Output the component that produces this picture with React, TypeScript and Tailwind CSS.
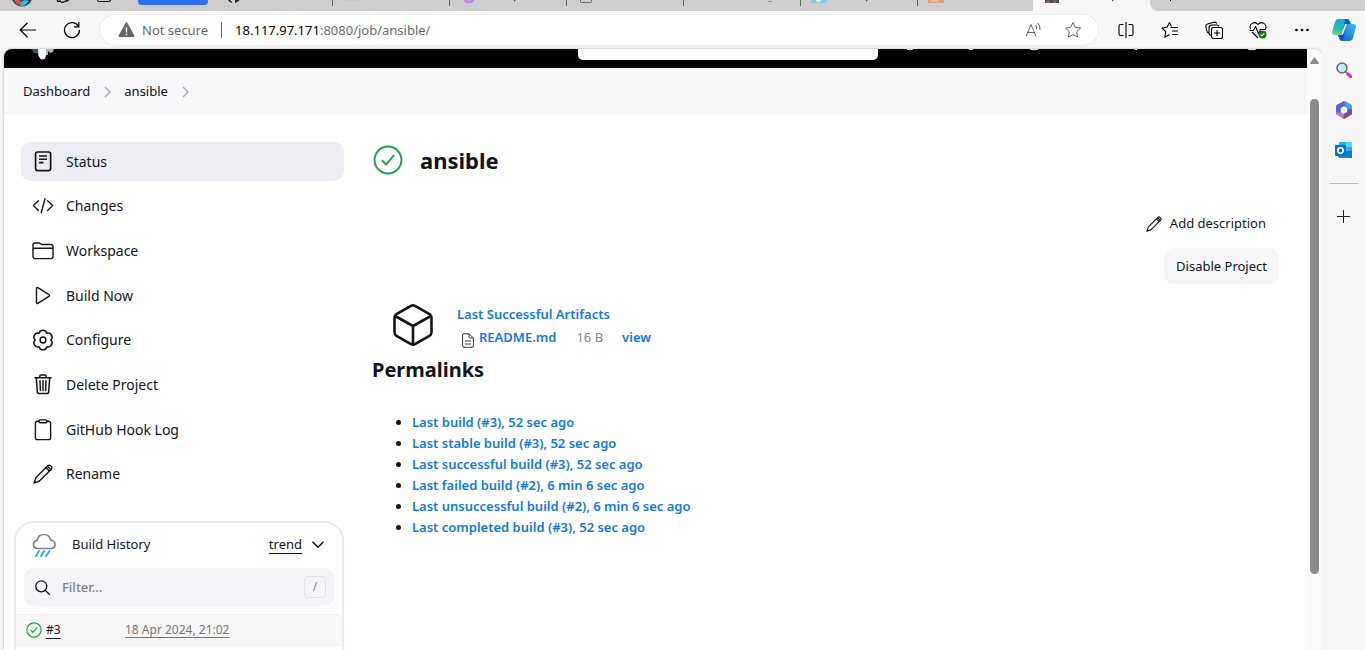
import type { ReactNode } from "react";

const FONT = "font-['Noto_Sans','Open_Sans',sans-serif]";

function Pencil({ className }: { className: string }) {
  return (
    <svg viewBox="0 0 20 20" className={className} fill="none" stroke="currentColor" strokeWidth="1.4" strokeLinejoin="round" strokeLinecap="round">
      <path d="M1 19 3 13.6 14.6 2a2.4 2.4 0 0 1 3.4 3.4L6.4 17Z" />
      <path d="m13 3.6 3.4 3.4M14.4 2.2c1.2 1 2.4 2.2 3.4 3.4" />
    </svg>
  );
}

function CheckCircle({ className, width }: { className: string; width: number }) {
  return (
    <svg viewBox="0 0 30 30" className={className} fill="none" stroke="#1ea64b" strokeWidth={width} strokeLinecap="round" strokeLinejoin="round">
      <circle cx="15" cy="15" r="13.4" />
      <path d="m9.4 15.8 3.6 3.8 7.6-9" />
    </svg>
  );
}

const svg = {
  viewBox: "0 0 22 22",
  className: "size-[22px] shrink-0",
  fill: "none",
  stroke: "currentColor",
  strokeWidth: 1.4,
  strokeLinejoin: "round" as const,
  strokeLinecap: "round" as const,
};

const tasks: { label: string; icon: ReactNode }[] = [
  {
    label: "Status",
    icon: (
      <svg {...svg}>
        <rect x="3.6" y="1" width="15" height="18.6" rx="2" strokeWidth="1.7" />
        <path d="M7 5h8M7 8.2h8M7 11.6h4.5" strokeWidth="1.6" strokeLinecap="butt" />
      </svg>
    ),
  },
  {
    label: "Changes",
    icon: (
      <svg {...svg}>
        <path d="M6.4 5.8 1.4 10.6l5 4.8M15.6 5.8l5 4.8-5 4.800M13 3.8 9.2 17.8" />
      </svg>
    ),
  },
  {
    label: "Workspace",
    icon: (
      <svg {...svg}>
        <path d="M1 16.6V5a2 2 0 0 1 2-2h4c1.4 0 1.8 1.5 3.2 1.5H19a2 2 0 0 1 2 2v10.1a2 2 0 0 1-2 2H3a2 2 0 0 1-2-2ZM1 8.300h20" />
      </svg>
    ),
  },
  {
    label: "Build Now",
    icon: (
      <svg {...svg}>
        <path d="M4.500 3.400v14.200c0 .7.700 1.100 1.300.8l11.200-7.100a.9.900 0 0 0 0-1.600L5.800 2.600c-.6-.3-1.300.1-1.300.8Z" />
      </svg>
    ),
  },
  {
    label: "Configure",
    icon: (
      <svg {...svg}>
        <circle cx="11" cy="11" r="2.900" strokeWidth="1.500" />
        <path d="M18.800 11a4 4 0 0 1-3.900 6.750 4 4 0 0 1-7.800 0A4 4 0 0 1 3.200 11a4 4 0 0 1 3.900-6.750 4 4 0 0 1 7.800 0A4 4 0 0 1 18.800 11Z" strokeWidth="1.500" />
      </svg>
    ),
  },
  {
    label: "Delete Project",
    icon: (
      <svg {...svg}>
        <path d="M3 3.800h16M4.300 3.900l1 13.700a2 2 0 0 0 2 1.900h7.400a2 2 0 0 0 2-1.900l1-13.700M7.800 3.700V2.300c0-.7.500-1.200 1.200-1.200h4c.7 0 1.200.5 1.200 1.200v1.400M8 6.700l.4 9.800M11 6.700v9.800M14 6.700l-.4 9.800" strokeWidth="1.500" />
      </svg>
    ),
  },
  {
    label: "GitHub Hook Log",
    icon: (
      <svg {...svg}>
        <path d="M7 2.200H5.600a2.200 2.200 0 0 0-2.200 2.200v14a2.200 2.200 0 0 0 2.200 2.200h10.800a2.200 2.200 0 0 0 2.200-2.200v-14a2.200 2.200 0 0 0-2.200-2.200H15" />
        <rect x="7" y=".9" width="8" height="2.800" rx="1.300" />
      </svg>
    ),
  },
  { label: "Rename", icon: <Pencil className="size-[22px] shrink-0 p-px" /> },
];

const permalinks = [
  "Last build (#3), 52 sec ago",
  "Last stable build (#3), 52 sec ago",
  "Last successful build (#3), 52 sec ago",
  "Last failed build (#2), 6 min 6 sec ago",
  "Last unsuccessful build (#2), 6 min 6 sec ago",
  "Last completed build (#3), 52 sec ago",
];

const tabDrawings: ReactNode[] = [
  <path key="a" d="m12 0 1.500 2 2.500.8V1.500L14 0ZM19 0v3l3-1.500L23.500 0Z" fill="#24292f" />,
  <rect key="b" x="12" width="14" height="1" fill="#c3c3ce" />,
  <g key="c">
    <circle cx="19" cy="-3" r="5" fill="none" stroke="#bd8be4" strokeWidth="3" />
    <path d="m64 1 1.500-1" stroke="#222" />
  </g>,
  <path key="d" d="M13.500 0v1.500q0 1 1 1h9q1 0 1-1V0" fill="none" stroke="#696969" />,
  <path key="e" d="M84 1.500h4" stroke="#999" />,
  <g key="f">
    <path d="M10 0h16v3H10z" fill="#7fcddd" />
    <path d="M15 0h5v1q-2 2-5 0Z" fill="#e4f5f7" />
    <path d="m65 1 1.500-1" stroke="#222" />
  </g>,
  <g key="g">
    <path d="M10 0h16v3H10z" fill="#dfa578" />
    <path d="M13 1h7" stroke="#f8d7bd" />
  </g>,
];

function TabStrip() {
  return (
    <div className="flex h-[11px] shrink-0 overflow-hidden bg-[#cdcdcd]">
      <svg viewBox="0 0 138 11" className="h-[11px] w-[138px] shrink-0" fill="none">
        <circle cx="22" cy="-4" r="10.500" fill="#2b4a6c" />
        <path d="M14 0h5l3 3-3 2q-3-1-5-5Z" fill="#e25345" />
        <path d="M21 2l4-2 4 1-5 5-4-.5Z" fill="#3fb5de" />
        <path d="m57 0 1 1.500 3-.5M61 2.500q5-.5 5-2.500M66 1.500l3-1.500" stroke="#111" strokeWidth="1.300" />
        <path d="M97.500 0q0 1.500 2 1.500h9q2 0 2-1.500" stroke="#111" strokeWidth="1.200" />
      </svg>
      <div className="h-[5px] w-[70px] shrink-0 rounded-b bg-[#2c6fef]" />
      <div className="w-2 shrink-0" />
      {tabDrawings.map((drawing, i) => (
        <div key={i} className={`flex shrink-0 justify-between ${i < 6 ? "w-[117px]" : "w-[115px] rounded-br-lg"}`}>
          <svg viewBox="0 0 110 11" className="h-[11px] w-[110px]">{drawing}</svg>
          {i < 6 && <span className="h-1.5 w-px bg-[#666]" />}
        </div>
      ))}
      <div className="w-[117px] shrink-0">
        <svg viewBox="0 0 117 11" className="h-[11px] w-[117px]">
          <path d="M0 0h117v11H-5Q0 10 0 5Z" fill="#f7f7f7" />
          <path d="M12 0h14v3H12z" fill="#405065" />
          <path d="m13 3 2-3 2 3M21 0l3 3h-4Z" fill="#d54c42" />
          <path d="m79 1 1.500-1" stroke="#333" />
        </svg>
      </div>
      <div className="flex-1 bg-[#f7f7f7]">
        <div className="h-full rounded-bl-lg bg-[#cdcdcd] pl-5">
          <div className="h-px w-px bg-black" />
        </div>
      </div>
    </div>
  );
}

const iconButton = "flex size-6 shrink-0 items-center justify-center";

function Toolbar() {
  return (
    <div className="flex h-[38px] shrink-0 items-center bg-[#f7f7f7] pl-4 pr-[9px] text-black">
      <button aria-label="Back" className={iconButton}>
        <svg viewBox="0 0 18 16" className="h-4 w-[18px]" fill="none" stroke="currentColor" strokeWidth="1.200"><path d="M17 8H1.500M8.500.8 1.200 8l7.300 7.200" /></svg>
      </button>
      <button aria-label="Refresh" className="ml-5 flex size-6 items-center justify-center">
        <svg viewBox="0 0 18 18" className="size-[18px]" fill="none" stroke="currentColor" strokeWidth="1.300"><path d="M15.600 5.500A7.500 7.500 0 1 0 16.500 9M15.800 1v4.800H11" /></svg>
      </button>
      <div className="ml-4 flex h-[30px] flex-1 items-center rounded-full bg-white pl-[18px] pr-[13px] shadow-[0_0_2px_#0002]">
        <svg viewBox="0 0 17 16" className="h-4 w-[17px]"><path d="M7.500 1a1.200 1.200 0 0 1 2 0l6.800 12.500a1 1 0 0 1-.9 1.500H1.600a1 1 0 0 1-.9-1.500Z" fill="#666" /><path d="M8.500 5.500v5M8.500 11.700v1.600" stroke="#fff" strokeWidth="1.500" /></svg>
        <span className="ml-[7px] whitespace-nowrap pt-px text-[13px] text-[#666]">Not secure</span>
        <span className="ml-[13px] h-4 w-px bg-[#777]" />
        <span className="ml-[13px] pt-px text-[13px] text-[#6b6b6b]"><span className="text-black">18.117.97.171</span>:8080/job/ansible/</span>
        <button aria-label="Read aloud" className="ml-auto flex size-6 items-center justify-center text-[#666]">
          <svg viewBox="0 0 17 16" className="h-4 w-[17px]" fill="none" stroke="currentColor"><path d="m1 14.500 5-12 5 12M3 10.500h6.500M10.500 3q1.500 1.500 1 4M12.500 1q3 2.500 2.500 7" /></svg>
        </button>
        <button aria-label="Add to favorites" className="ml-4 flex size-6 items-center justify-center text-[#666]">
          <svg viewBox="0 0 18 18" className="size-[18px]" fill="none" stroke="currentColor" strokeLinejoin="round"><path d="m9 1.500 2.300 4.900 5.300.7-3.900 3.700 1 5.400L9 13.600l-4.700 2.600 1-5.400L1.400 7.100l5.300-.7Z" /></svg>
        </button>
      </div>
      <button aria-label="Split screen" className="ml-4 flex size-6 items-center justify-center">
        <svg viewBox="0 0 18 16" className="h-4 w-[18px]" fill="none" stroke="currentColor" strokeWidth="1.100"><path d="M6.500 2.500h-3a1.500 1.500 0 0 0-1.500 1.500v8a1.500 1.500 0 0 0 1.500 1.500h3M11.500 2.500h3A1.500 1.500 0 0 1 16 4v8a1.500 1.500 0 0 1-1.500 1.500h-3M9 0v16" /></svg>
      </button>
      <button aria-label="Favorites" className="ml-5 flex size-6 items-center justify-center">
        <svg viewBox="0 0 18 18" className="size-[18px]" fill="none" stroke="currentColor" strokeWidth="1.100" strokeLinejoin="round"><path d="M10.500 5.500 8.500 1.500 6.200 6.100 1 7l3.800 3.700-1 5.500 4.700-2.600M9.500 6.500H17M11 10h6M11 13.500h6" /></svg>
      </button>
      <button aria-label="Collections" className="ml-5 flex size-6 items-center justify-center">
        <svg viewBox="0 0 18 18" className="size-[18px]" fill="none" stroke="currentColor" strokeWidth="1.100"><path d="M3.800 12.300Q2 11.500 1.700 9.500L.8 5.500Q.5 3.500 2.500 3L9 1.200q2-.4 2.700 1.300M6 14.500Q4 14 4 12V7q0-3 3-3h4.500q2 0 2.500 1.500" /><rect x="6.500" y="6.500" width="11" height="11" rx="2" /><path d="M12 9v6M9 12h6" /></svg>
      </button>
      <button aria-label="Browser essentials" className="ml-5 flex size-6 items-center justify-center">
        <svg viewBox="0 0 18 18" className="size-[18px]" fill="none" stroke="currentColor" strokeWidth="1.100" strokeLinejoin="round"><path d="M1.500 8C-.5 3 5.500-.5 9 3.500c3.500-4 9.500-.5 7.500 4.500M3 11l6 6M.5 9.500h4l2-4 3 7 2-4h5" /><circle cx="13.500" cy="13.500" r="4" fill="#107c10" stroke="none" /><path d="m11.600 13.700 1.300 1.200 2.500-2.600" stroke="#fff" /></svg>
      </button>
      <button aria-label="Settings and more" className="ml-5 flex size-6 items-center justify-center">
        <svg viewBox="0 0 14 4" className="h-1 w-3.5"><circle cx="1.500" cy="2" r="1.300" /><circle cx="7" cy="2" r="1.300" /><circle cx="12.500" cy="2" r="1.300" /></svg>
      </button>
      <button aria-label="Copilot" className="ml-[18px] flex size-6 items-center justify-center">
        <svg viewBox="0 0 24 22" className="h-[22px] w-6 shrink-0">
          <defs>
            <linearGradient id="cpA" x1="0" y1="0" x2="0" y2="1"><stop stopColor="#14a3df" /><stop offset=".55" stopColor="#28bdaf" /><stop offset="1" stopColor="#72d28c" /></linearGradient>
            <linearGradient id="cpB" x1="1" y1="0" x2="0" y2="1"><stop stopColor="#35b9ef" /><stop offset="1" stopColor="#195ddc" /></linearGradient>
          </defs>
          <path d="M6 0h9q2 0 2.600 2l1.200 3h-4L10 16H3q-4 0-2.700-4L3 3q.8-3 3-3Z" fill="url(#cpA)" />
          <path d="M13 0h2q2 0 2.600 2l1.200 3h-4q-2 0-2.500 2l-1 3Z" fill="#0d67a7" />
          <path d="M14.800 5H21q4 0 2.700 4L21 19q-.8 3-3 3H10q-2 0-2.600-2L6 16h3q1.500 0 2.200-2L13 7q.5-2 1.800-2Z" fill="url(#cpB)" />
          <path d="M6 16h3q1.500 0 2.200-2l1.500-4-.8 8q-.5 4-3.400 3Z" fill="#1b47c5" />
          <path d="M14.800 5 11 15.500 9.500 16l3.500-11Z" fill="#f7f7f7" />
        </svg>
      </button>
    </div>
  );
}

function EdgeSidebar() {
  return (
    <aside className="flex w-[43px] shrink-0 flex-col items-center bg-[#f6f6f6] pt-[11px]">
      <button aria-label="Search" className="flex size-5 items-center justify-center">
        <svg viewBox="0 0 16 16" className="size-4"><path d="m12 12 2.500 2.500" stroke="#c92ff0" strokeWidth="3.200" strokeLinecap="round" /><path d="m9.500 9.500 2 2" stroke="#666" strokeWidth="1.600" /><circle cx="6" cy="6" r="5" fill="#cbe7f7" stroke="#666" strokeWidth="1.500" /></svg>
      </button>
      <button aria-label="Microsoft 365" className="mt-5 flex size-5 items-center justify-center">
        <svg viewBox="0 0 18 18" className="size-[18px]">
          <path d="M8 0q1-.5 2 0l6 3.500q1 .6 1 2V11l-5-2V7L8 5Z" fill="#439edd" />
          <path d="M9 0 2 3.800Q1 4.500 1 6v6q0 2 2 2l3-2V7l4-2.500Z" fill="#5b63c8" />
          <path d="M1 11.500q0 1.500 1 2.200L8 17.500q1 .6 2 0l1-5-2 .5-3-1.500Z" fill="#a77cd8" />
          <path d="M17 8v4.500q0 1-1 1.500l-6 3.500q-1 .4-1.500 0l.5-5 3-1.700V8Z" fill="#7d48a0" />
          <path d="m9 5.400 3.200 1.800v3.700L9 12.700l-3.200-1.800V7.200Z" fill="#f6f6f6" />
        </svg>
      </button>
      <button aria-label="Outlook" className="mt-5 flex size-5 items-center justify-center">
        <svg viewBox="0 0 18 18" className="size-[18px]">
          <path d="M4 1h13v10H4Z" fill="#31aeea" /><path d="M11 1h6v5h-6Z" fill="#51d3fa" /><path d="M3 10h14v7H5q-2 0-2-2Z" fill="#1685d5" /><path d="m17 9-7 4 7 4Z" fill="#087bc6" />
          <rect x="0" y="4" width="11" height="11" rx="1" fill="#0d6fc7" /><circle cx="5.500" cy="9.500" r="2.700" fill="none" stroke="#fff" strokeWidth="1.500" />
        </svg>
      </button>
      <span className="mt-[23px] h-px w-7 bg-[#b8b8b8]" />
      <button aria-label="Customize" className="mt-[22px] flex size-5 items-center justify-center">
        <svg viewBox="0 0 13 13" className="size-[13px]" stroke="#222"><path d="M6.500 0v13M0 6.500h13" /></svg>
      </button>
    </aside>
  );
}

function Breadcrumb() {
  return (
    <nav aria-label="Breadcrumb" className="flex h-[46px] items-center gap-[13px] bg-[#f6f6f9] px-[19px] pt-0.5 text-[13px]">
      {["Dashboard", "ansible"].map((name) => (
        <span key={name} className="flex items-center gap-3.5">
          <a href="#">{name}</a>
          <svg viewBox="0 0 7 12" className="h-3 w-[7px]" fill="none" stroke="#a5a5b8" strokeWidth="1.400"><path d="m1 1 5 5-5 5" /></svg>
        </span>
      ))}
    </nav>
  );
}

function BuildHistory() {
  return (
    <section className="mt-[27px] h-60 w-[330px] rounded-[20px] border-2 border-[#ebebf2] bg-white pt-1.5">
      <div className="flex h-8 items-center pl-4 pr-[18px]">
        <svg viewBox="0 0 24 24" className="size-6" fill="none">
          <path d="M6 15.500q-4.500 0-4.500-4Q1.500 8 5 7.300 6.500 1.500 12 1.500q5.500 0 6.500 5.500 4.500.5 4.500 4.500 0 4-4.500 4Z" stroke="#80809a" strokeWidth="1.700" />
          <path d="m7 18-1.500 2M5 21.500 4 23M12 18l-3 5M17.500 18l-1.500 2.500M15 21.500l-1 1.500" stroke="#2fa8e8" strokeWidth="1.900" strokeLinecap="round" />
        </svg>
        <h2 className="ml-4 text-[13px]">Build History</h2>
        <a href="#" className="ml-auto text-[13px] underline underline-offset-4">trend</a>
        <svg viewBox="0 0 12 8" className="ml-2.5 h-2 w-3" fill="none" stroke="currentColor" strokeWidth="1.600" strokeLinecap="round" strokeLinejoin="round"><path d="m1 1.200 5 5 5-5" /></svg>
      </div>
      <label className="mx-2 mt-[7px] flex h-[38px] items-center rounded-[10px] bg-[#f3f3f8] pl-[11px] pr-2">
        <svg viewBox="0 0 15 15" className="size-[15px] shrink-0" fill="none" stroke="currentColor" strokeWidth="1.300" strokeLinecap="round"><circle cx="6.300" cy="6.300" r="5.500" /><path d="m10.400 10.400 4 4" /></svg>
        <input aria-label="Filter builds" placeholder="Filter..." className="ml-3 min-w-0 flex-1 bg-transparent pt-0.5 text-[13px] font-medium outline-none placeholder:text-[#80809a]" />
        <kbd className="flex size-[22px] items-center justify-center rounded border border-[#e0e0e9] font-['Noto_Sans',sans-serif] text-xs text-[#80809a]">/</kbd>
      </label>
      <table className="mt-2 w-full border-y border-[#f0f0f3] bg-[#f7f7f7] text-xs">
        <tbody>
          <tr className="h-[31px]">
            <td className="w-[109px] pl-2.5">
              <a href="#" className="flex items-center gap-1 underline underline-offset-4">
                <CheckCircle className="size-4" width={2.4} />#3
              </a>
            </td>
            <td><a href="#" className="text-[#777] underline underline-offset-3">18 Apr 2024, 21:02</a></td>
          </tr>
        </tbody>
      </table>
    </section>
  );
}

function MainPanel() {
  return (
    <main className="min-w-0 flex-1 pr-7">
      <div className="flex h-9 items-center gap-4">
        <CheckCircle className="size-8 p-px" width={2} />
        <h1 className="text-[22px] font-bold">ansible</h1>
      </div>
      <div className="mt-7 flex flex-col items-end gap-1.5 text-[13px]">
        <a href="#" className="flex h-9 items-center gap-2 pr-[13px]"><Pencil className="size-4" />Add description</a>
        <button className="h-9 rounded-[10px] bg-[#f6f6f9] px-3 pt-0.5">Disable Project</button>
      </div>
      <div className="mt-[17px] flex gap-[22px] pl-[19px]">
        <svg viewBox="0 0 44 48" className="h-12 w-11" fill="none" stroke="currentColor" strokeWidth="2.600" strokeLinejoin="round" strokeLinecap="round">
          <path d="M20 4.800a4 4 0 0 1 4 0l14.500 8.400q2 1.200 2 3.500v14.600q0 2.300-2 3.500L24 43.200a4 4 0 0 1-4 0L5.500 34.800q-2-1.200-2-3.500V16.700q0-2.300 2-3.500ZM4.100 15 22 25l17.900-10M22 25v18.500" />
        </svg>
        <div className="text-[13px] font-semibold text-[#1277eb]">
          <a href="#" className="flex h-7 items-center">Last Successful Artifacts</a>
          <div className="flex h-[18px] items-center pl-[5px]">
            <svg viewBox="0 0 12 15" className="mt-1 h-[15px] w-3" fill="none" stroke="#33333d"><path d="M2 .8h5L11.400 5v8q0 1.300-1.300 1.300H2Q.6 14.300.6 13V2Q.6.8 2 .8ZM7 .8v3q0 1.200 1.200 1.200h3M3 8h6M3 11h6" /></svg>
            <a href="#" className="ml-[5px]">README.md</a>
            <span className="ml-5 font-normal text-[#80809a]">16 B</span>
            <a href="#" className="ml-[19px]">view</a>
          </div>
        </div>
      </div>
      <h2 className="mt-[5px] text-xl font-bold leading-8">Permalinks</h2>
      <ul className="mt-[26px] list-disc pl-10 text-[13px] font-semibold leading-[21px] marker:text-[#14141f]">
        {permalinks.map((label) => (
          <li key={label}><a href="#" className="text-[#1277eb]">{label}</a></li>
        ))}
      </ul>
    </main>
  );
}

function JenkinsHeader() {
  return (
    <header className="flex h-[19px] items-start bg-black pl-6">
      <svg viewBox="0 0 26 12" className="h-3 w-[26px] shrink-0"><path d="M3 0h9v5L6 4Z" fill="#3d566b" /><path d="M10 0h8v6l-1 4-4 .5L10.500 7Z" fill="#fff" /><path d="M18 0h8l-1 3-3 1-2-2v4h-2Z" fill="#adb5bc" /></svg>
      <div className="ml-auto flex w-[729px] shrink-0 items-start">
        <div className="h-[11px] w-[300px] shrink-0 rounded-b-[5px] bg-white" />
        <svg viewBox="0 0 420 4" className="h-1 w-[420px] shrink-0" fill="none" stroke="#fff" strokeWidth="1.200"><path d="M29 0q3 1.500 6 0M91 0q2 1 4 0M152 0q4 1.500 8 0M256 0l3 .5M370 0q4 1.500 8 0" /></svg>
      </div>
    </header>
  );
}

export default function App() {
  return (
    <div className={`${FONT} flex h-screen flex-col overflow-hidden bg-[#f6f6f6] text-[#14141f]`}>
      <TabStrip />
      <Toolbar />
      <div className="flex min-h-0 flex-1 pl-1">
        <div className="flex min-w-0 flex-1 overflow-hidden rounded-t-lg bg-white shadow-[0_0_3px_#0004]">
          <div className="min-w-0 flex-1">
            <JenkinsHeader />
            <Breadcrumb />
            <div className="flex gap-7">
              <div className="w-[340px] shrink-0 pl-2.5 pt-7">
                <nav aria-label="Tasks" className="ml-[7px] flex h-[352px] flex-col justify-between text-sm">
                  {tasks.map(({ label, icon }, i) => (
                    <a key={label} href="#" className={`flex h-[39px] items-center gap-3 rounded-[10px] px-[11px] ${i === 0 ? "bg-[#ecedf3]" : ""}`}>
                      {icon}
                      {label}
                    </a>
                  ))}
                </nav>
                <BuildHistory />
              </div>
              <div className="flex min-w-0 flex-1 pt-7"><MainPanel /></div>
            </div>
          </div>
          <div className="flex w-[15px] shrink-0 flex-col items-center bg-[#fcfcfc] pt-2">
            <svg viewBox="0 0 9 7" className="h-[7px] w-[9px]"><path d="M4.500 0 9 6q0 1-1 1H1Q0 7 0 6Z" fill="#8a8a8a" /></svg>
            <div className="mt-[35px] h-[475px] w-[9px] shrink-0 rounded-full bg-[#8b8b8b]" />
          </div>
        </div>
        <EdgeSidebar />
      </div>
    </div>
  );
}
